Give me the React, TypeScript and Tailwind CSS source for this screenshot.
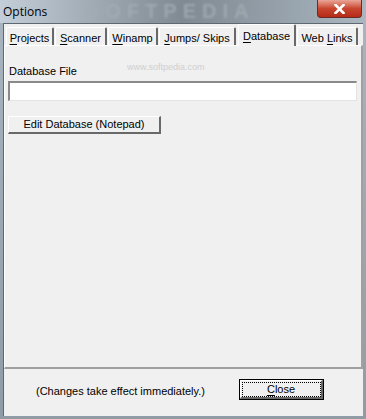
import React from "react";

const tabs = [
  { key: "P", rest: "rojects", w: 48 },
  { key: "S", rest: "canner", w: 52 },
  { key: "W", rest: "inamp", w: 50 },
  { key: "J", rest: "umps/ Skips", w: 77 },
  { key: "D", rest: "atabase", w: 58, active: true },
  { pre: "Web ", key: "L", rest: "inks", w: 61 },
];

function Tab({ tab }: { tab: (typeof tabs)[number] }) {
  if (tab.active) {
    return (
      <div
        className="relative z-10 -mb-px ml-[2px] flex h-[22px] items-start justify-center rounded-t-[2px] border-l border-t border-r-2 border-l-white border-t-white border-r-[#696969] bg-[#f0f0f0] pt-[3px]"
        style={{ width: tab.w }}
      >
        <span className="whitespace-nowrap">
          <span className="underline underline-offset-2">{tab.key}</span>
          {tab.rest}
        </span>
      </div>
    );
  }
  return (
    <div
      className="flex h-[18px] items-start justify-center rounded-t-[2px] border-l border-t border-r-2 border-l-white border-t-white border-r-[#696969] bg-[#f0f0f0] pt-[2px]"
      style={{ width: tab.w, marginLeft: 1 }}
    >
      <span className="whitespace-nowrap">
        {tab.pre}
        <span className="underline underline-offset-2">{tab.key}</span>
        {tab.rest}
      </span>
    </div>
  );
}

export default function App() {
  return (
    <div className="relative h-[419px] w-[366px] overflow-hidden bg-gradient-to-b from-[#a9b6c1] to-[#8f9ba5] font-['Liberation_Sans',Arial,sans-serif] text-[11px] text-black">
      {/* title bar */}
      <div className="relative flex h-[23px] items-center overflow-hidden bg-gradient-to-r from-[#c3ced8] via-[#7f8a93] to-[#aab6c0] pl-[3px]">
        <span className="relative z-10 font-['Open_Sans','Noto_Sans',sans-serif] text-[12px] text-black">
          Options
        </span>
        <span className="pointer-events-none absolute left-[86px] top-0 select-none text-[20px] font-bold leading-[23px] tracking-[6px] text-[#a3acb3] opacity-80 blur-[1.2px]">
          SOFTPEDIA
        </span>
        <div className="absolute right-[4px] top-0 flex h-[18px] w-[45px] items-center justify-center rounded-b-[4px] border border-t-0 border-[#6b2a22] bg-gradient-to-b from-[#e8a597] via-[#c8452f] to-[#b52a16]">
          <svg width="11" height="10" viewBox="0 0 11 10">
            <path d="M1.5 1 L9.5 9 M9.5 1 L1.5 9" stroke="#fff" strokeWidth="2.6" strokeLinecap="square" />
          </svg>
        </div>
      </div>

      {/* client area */}
      <div className="ml-[3px] flex h-[393px] w-[360px] flex-col border-l border-t border-[#5e6870] bg-[#f0f0f0]">
        {/* tab strip */}
        <div className="flex h-[21px] items-end pl-[1px]">
          {tabs.map((t) => (
            <Tab key={t.key} tab={t} />
          ))}
        </div>

        {/* tab panel */}
        <div className="relative h-[324px] border-b-2 border-l border-r-2 border-t border-b-[#a0a0a0] border-l-white border-r-[#a0a0a0] border-t-white px-[3px] pt-[19px]">
          <span className="pointer-events-none absolute left-[122px] top-[16px] text-[9px] leading-[10px] text-[#cfcfcf]">
            www.softpedia.com
          </span>
          <div className="pl-[1px] leading-[13px]">Database File</div>
          <div className="mt-[3px] h-[20px] w-[349px] border-l-2 border-t-2 border-b border-r border-l-[#8a8a8a] border-t-[#8a8a8a] border-b-[#e3e3e3] border-r-[#e3e3e3] bg-white" />
          <button className="mt-[15px] flex h-[18px] w-[153px] items-center justify-center border-l border-t border-b-2 border-r-2 border-l-white border-t-white border-b-[#696969] border-r-[#696969] bg-[#f0f0f0] leading-none">
            Edit Database (Notepad)
          </button>
        </div>

        {/* bottom area */}
        <div className="flex flex-1 items-start pl-[32px] pr-[39px] pt-[10px]">
          <span className="mt-[4px]">(Changes take effect immediately.)</span>
          <button className="ml-auto flex h-[21px] w-[85px] items-center justify-center border border-black bg-[#f0f0f0] p-0">
            <span className="flex h-full w-full items-center justify-center border-b-2 border-l border-r-2 border-t border-b-[#696969] border-l-white border-r-[#696969] border-t-white">
              <span className="flex h-[13px] w-[77px] items-center justify-center outline-1 outline-dotted outline-black">
                <span className="underline underline-offset-2">C</span>lose
              </span>
            </span>
          </button>
        </div>
      </div>
    </div>
  );
}
